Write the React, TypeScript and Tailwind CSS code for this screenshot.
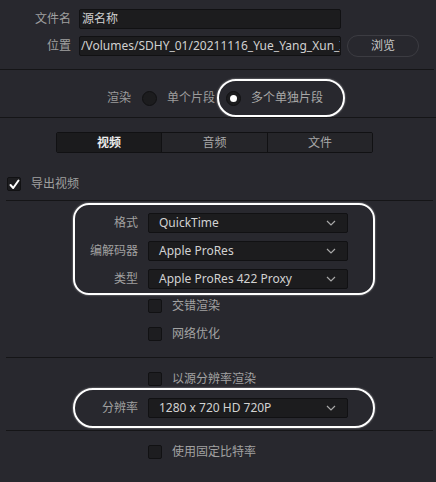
import React from "react";

const Chevron = () => (
  <svg width="10" height="6" viewBox="0 0 10 6" className="shrink-0">
    <path d="M1 1 L5 5 L9 1" fill="none" stroke="#a8a8a8" strokeWidth="1.2" />
  </svg>
);

const Dropdown = ({ value }: { value: string }) => (
  <div className="w-[200px] h-[20px] bg-[#1c1c1e] border border-[#111113] rounded-[2px] flex items-center justify-between pl-[10px] pr-[11px]">
    <span className="text-[12px] text-[#d2d2d2] leading-none">{value}</span>
    <Chevron />
  </div>
);

const Check = ({ checked = false }: { checked?: boolean }) => (
  <div className="w-[14px] h-[14px] bg-[#1d1d20] border border-[#111113] rounded-[2px] flex items-center justify-center shrink-0">
    {checked && (
      <svg width="11" height="11" viewBox="0 0 11 11">
        <path d="M1.5 6 L4.2 9 L9.5 1.5" fill="none" stroke="#ffffff" strokeWidth="2" strokeLinecap="round" strokeLinejoin="round" />
      </svg>
    )}
  </div>
);

const CheckRow = ({ label, className = "" }: { label: string; className?: string }) => (
  <div className={"flex items-center ml-[148px] h-[14px] " + className}>
    <Check />
    <span className="ml-[10px] text-[12px] text-[#a2a2a2] leading-none">{label}</span>
  </div>
);

const Radio = ({ on = false }: { on?: boolean }) => (
  <div className="w-[15px] h-[15px] rounded-full bg-[#1c1c1e] border border-[#111113] flex items-center justify-center shrink-0">
    {on && <div className="w-[7px] h-[7px] rounded-full bg-white" />}
  </div>
);

export default function App() {
  return (
    <div
      className="w-[436px] h-[482px] bg-[#28282e] overflow-hidden flex flex-col"
      style={{ fontFamily: '"Noto Sans", "Noto Sans CJK SC", sans-serif' }}
    >
      {/* file name */}
      <div className="mt-[9px] h-[20px] flex items-center">
        <span className="w-[71px] text-right text-[12px] text-[#a0a0a0] leading-none">文件名</span>
        <div className="ml-[8px] w-[262px] h-[20px] bg-[#1c1c1e] border border-[#111113] rounded-[2px] flex items-center pl-[2px]">
          <span className="text-[12px] text-[#d0d0d0] leading-none">源名称</span>
        </div>
      </div>
      {/* location */}
      <div className="mt-[7px] h-[20px] flex items-center">
        <span className="w-[71px] text-right text-[12px] text-[#a0a0a0] leading-none">位置</span>
        <div className="ml-[8px] w-[262px] h-[20px] bg-[#1c1c1e] border border-[#111113] rounded-[2px] flex items-center pl-[1px] overflow-hidden">
          <span className="text-[12px] text-[#d0d0d0] leading-none whitespace-nowrap">/Volumes/SDHY_01/20211116_Yue_Yang_Xun_I</span>
        </div>
        <div className="ml-[6px] w-[72px] h-[22px] rounded-full border border-[#3c3c42] flex items-center justify-center">
          <span className="text-[12px] text-[#c8c8c8] leading-none">浏览</span>
        </div>
      </div>
      <div className="mt-[13px] h-px w-[434px] bg-[#151517]" />
      {/* render */}
      <div className="mt-[9px] h-[38px] flex items-center pl-[107px]">
        <span className="text-[12px] text-[#9c9c9c] leading-none">渲染</span>
        <div className="ml-[11px]"><Radio /></div>
        <span className="ml-[10px] text-[12px] text-[#9c9c9c] leading-none">单个片段</span>
        <div className="ml-[2px] w-[128px] h-[38px] rounded-full border-2 border-white shadow-[0_0_2px_rgba(255,255,255,0.6)] flex items-center pl-[7px]">
          <Radio on />
          <span className="ml-[10px] text-[12px] text-[#a8a8a8] leading-none">多个单独片段</span>
        </div>
      </div>
      <div className="h-px w-[436px] bg-[#151517]" />
      {/* tabs */}
      <div className="mt-[14px] ml-[56px] w-[317px] h-[21px] flex border border-[#111113] rounded-[2px] overflow-hidden">
        <div className="w-[105px] bg-[#1b1b1d] flex items-center justify-center border-r border-[#111113]">
          <span className="text-[12px] font-bold text-[#ececec] leading-none">视频</span>
        </div>
        <div className="w-[106px] bg-[#252529] flex items-center justify-center border-r border-[#111113]">
          <span className="text-[12px] text-[#a8a8a8] leading-none">音频</span>
        </div>
        <div className="flex-1 bg-[#252529] flex items-center justify-center">
          <span className="text-[12px] text-[#a8a8a8] leading-none">文件</span>
        </div>
      </div>
      {/* export video */}
      <div className="mt-[24px] ml-[7px] h-[14px] flex items-center">
        <Check checked />
        <span className="ml-[10px] text-[12px] text-[#a0a0a0] leading-none">导出视频</span>
      </div>
      <div className="mt-[9px] ml-[6px] h-px w-[427px] bg-[#151517]" />
      {/* format box */}
      <div className="mt-[2px] ml-[73px] w-[302px] h-[92px] rounded-[16px] border-2 border-white shadow-[0_0_2px_rgba(255,255,255,0.6)] flex flex-col gap-[8px] pt-[8px]">
        {[
          ["格式", "QuickTime"],
          ["编解码器", "Apple ProRes"],
          ["类型", "Apple ProRes 422 Proxy"],
        ].map(([l, v]) => (
          <div key={l} className="flex items-center h-[20px]">
            <span className="w-[63px] text-right text-[12px] text-[#a0a0a0] leading-none">{l}</span>
            <div className="ml-[10px]"><Dropdown value={v} /></div>
          </div>
        ))}
      </div>
      <CheckRow label="交错渲染" className="mt-[4px]" />
      <CheckRow label="网络优化" className="mt-[14px]" />
      <div className="mt-[16px] ml-[6px] h-px w-[427px] bg-[#151517]" />
      <CheckRow label="以源分辨率渲染" className="mt-[14px]" />
      <div className="mt-[2px] ml-[73px] w-[302px] h-[40px] rounded-full border-2 border-white shadow-[0_0_2px_rgba(255,255,255,0.6)] flex items-center">
        <span className="w-[63px] text-right text-[12px] text-[#a0a0a0] leading-none">分辨率</span>
        <div className="ml-[10px]"><Dropdown value="1280 x 720 HD 720P" /></div>
      </div>
      <div className="mt-[2px] ml-[6px] h-px w-[427px] bg-[#151517]" />
      <CheckRow label="使用固定比特率" className="mt-[14px]" />
    </div>
  );
}
